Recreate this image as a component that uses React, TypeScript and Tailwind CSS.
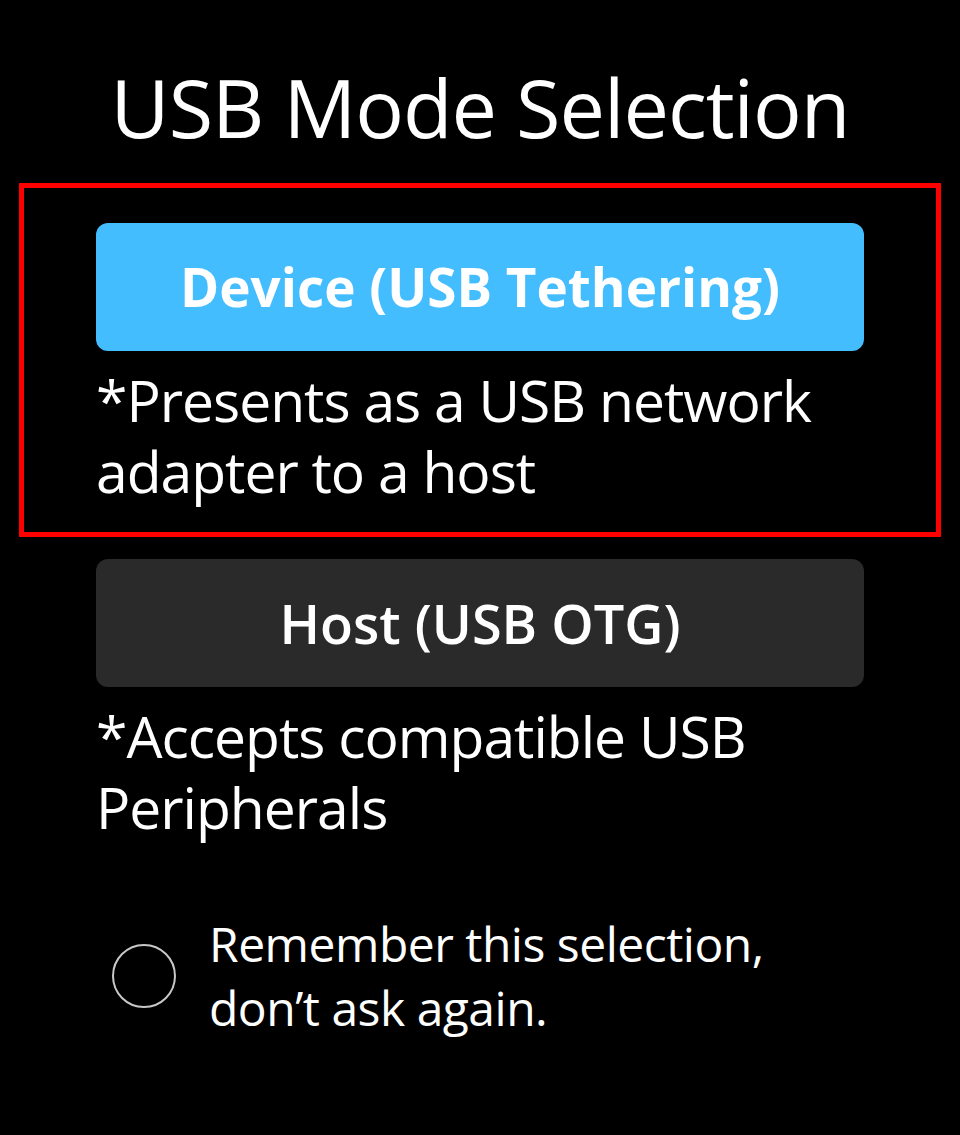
import React, { useState } from 'react';

export default function App() {
  const [mode, setMode] = useState<'device' | 'host'>('device');
  const [remember, setRemember] = useState(false);

  return (
    <div className="w-[960px] h-[1135px] bg-black text-white font-['Open_Sans',sans-serif] overflow-hidden">
      <h1 className="pt-[57px] text-center text-[81px] leading-[100px] font-normal tracking-[-1px]">
        USB Mode Selection
      </h1>

      <div className="mt-[26px] mx-[19px] border-[5px] border-[#ff0000] pt-[35px] pb-[25px] px-[72px]">
        <button
          onClick={() => setMode('device')}
          className={`w-[768px] h-[128px] rounded-[12px] text-[53px] font-bold ${mode === 'device' ? 'bg-[#44bdff]' : 'bg-[#2a2a2a]'}`}
        >
          Device (USB Tethering)
        </button>
        <p className="mt-[14px] text-[57px] leading-[71px] tracking-[-1px]">
          *Presents as a USB network adapter to a host
        </p>
      </div>

      <div className="px-[96px] pt-[22px]">
        <button
          onClick={() => setMode('host')}
          className={`w-[768px] h-[128px] rounded-[12px] text-[54px] font-semibold ${mode === 'host' ? 'bg-[#44bdff]' : 'bg-[#2a2a2a]'}`}
        >
          Host (USB OTG)
        </button>
        <p className="mt-[14px] text-[57px] leading-[71px] tracking-[-1px]">
          *Accepts compatible USB Peripherals
        </p>
      </div>

      <div className="flex items-center gap-[33px] pl-[112px] pt-[69px]">
        <button
          onClick={() => setRemember(!remember)}
          className="w-[64px] h-[64px] shrink-0 rounded-full border-2 border-[#c8c8c8]"
        >
          {remember && <span className="block m-auto w-[36px] h-[36px] rounded-full bg-[#44bdff]" />}
        </button>
        <p className="w-[640px] text-[48px] leading-[64px] tracking-[-0.5px]">
          Remember this selection, don’t ask again.
        </p>
      </div>
    </div>
  );
}
